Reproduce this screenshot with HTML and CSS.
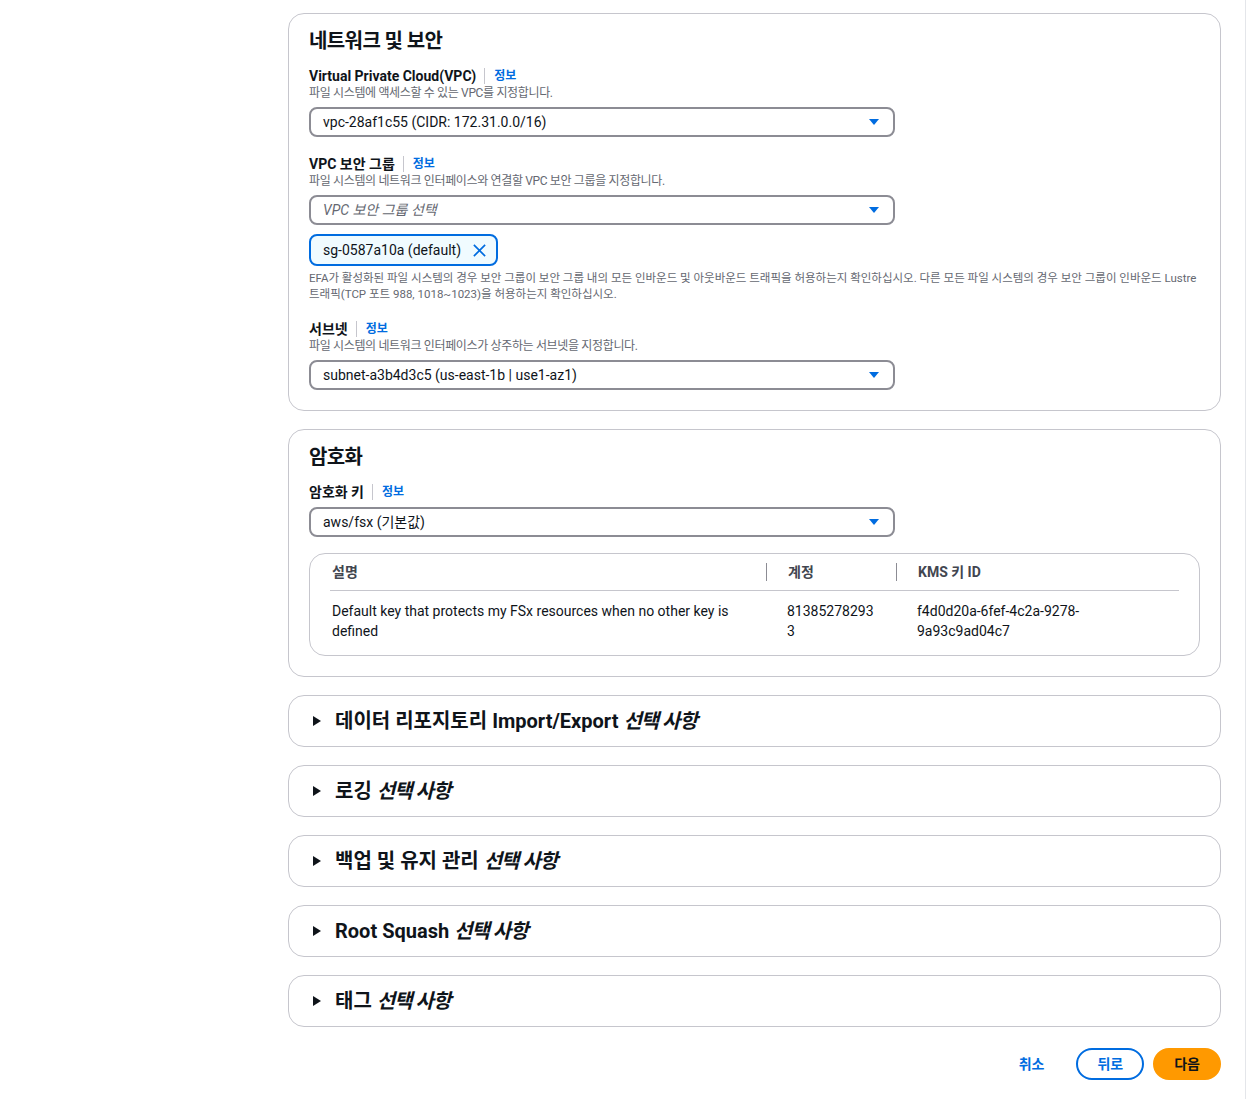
FILE: index.html
```html
<!DOCTYPE html>
<html lang="ko">
<head>
  <meta charset="UTF-8">
  <meta name="viewport" content="width=device-width, initial-scale=1.0">
  <title>파일 시스템 생성</title>
  <link rel="stylesheet" href="styles.css">
</head>
<body>
  <div class="page">
    <main class="main">

      <section class="panel">
        <h2 class="panel-title">네트워크 및 보안</h2>

        <div class="field">
          <div class="label-row">
            <span class="label">Virtual Private Cloud(VPC)</span>
            <a class="info" href="#">정보</a>
          </div>
          <div class="desc">파일 시스템에 액세스할 수 있는 VPC를 지정합니다.</div>
          <div class="select">
            <span class="select-value">vpc-28af1c55 (CIDR: 172.31.0.0/16)</span>
            <svg class="caret" viewBox="0 0 16 16" width="16" height="16"><polygon points="3,5 13,5 8,11"/></svg>
          </div>
        </div>

        <div class="field">
          <div class="label-row">
            <span class="label">VPC 보안 그룹</span>
            <a class="info" href="#">정보</a>
          </div>
          <div class="desc">파일 시스템의 네트워크 인터페이스와 연결할 VPC 보안 그룹을 지정합니다.</div>
          <div class="select">
            <span class="select-value placeholder">VPC 보안 그룹 선택</span>
            <svg class="caret" viewBox="0 0 16 16" width="16" height="16"><polygon points="3,5 13,5 8,11"/></svg>
          </div>
          <div class="tokens">
            <div class="token">
              <span>sg-0587a10a (default)</span>
              <svg class="dismiss" viewBox="0 0 16 16" width="16" height="16"><path d="M2 2l12 12M14 2L2 14"/></svg>
            </div>
          </div>
          <div class="constraint">EFA가 활성화된 파일 시스템의 경우 보안 그룹이 보안 그룹 내의 모든 인바운드 및 아웃바운드 트래픽을 허용하는지 확인하십시오. 다른 모든 파일 시스템의 경우 보안 그룹이 인바운드 Lustre 트래픽(TCP 포트 988, 1018~1023)을 허용하는지 확인하십시오.</div>
        </div>

        <div class="field">
          <div class="label-row">
            <span class="label">서브넷</span>
            <a class="info" href="#">정보</a>
          </div>
          <div class="desc">파일 시스템의 네트워크 인터페이스가 상주하는 서브넷을 지정합니다.</div>
          <div class="select">
            <span class="select-value">subnet-a3b4d3c5 (us-east-1b | use1-az1)</span>
            <svg class="caret" viewBox="0 0 16 16" width="16" height="16"><polygon points="3,5 13,5 8,11"/></svg>
          </div>
        </div>
      </section>

      <section class="panel">
        <h2 class="panel-title">암호화</h2>

        <div class="field">
          <div class="label-row">
            <span class="label">암호화 키</span>
            <a class="info" href="#">정보</a>
          </div>
          <div class="select">
            <span class="select-value">aws/fsx (기본값)</span>
            <svg class="caret" viewBox="0 0 16 16" width="16" height="16"><polygon points="3,5 13,5 8,11"/></svg>
          </div>
        </div>

        <div class="key-table">
          <table>
            <colgroup>
              <col class="col-desc">
              <col class="col-account">
              <col class="col-id">
            </colgroup>
            <thead>
              <tr>
                <th><span class="th-text">설명</span></th>
                <th><span class="th-text">계정</span></th>
                <th><span class="th-text">KMS 키 ID</span></th>
              </tr>
            </thead>
            <tbody>
              <tr>
                <td>Default key that protects my FSx resources when no other key is defined</td>
                <td class="account">813852782933</td>
                <td>f4d0d20a-6fef-4c2a-9278-9a93c9ad04c7</td>
              </tr>
            </tbody>
          </table>
        </div>
      </section>

      <section class="panel collapsed">
        <svg class="expand" viewBox="0 0 16 16" width="16" height="16"><polygon points="4,3 12,8 4,13"/></svg>
        <h2 class="collapsed-title">데이터 리포지토리 Import/Export <em>선택 사항</em></h2>
      </section>

      <section class="panel collapsed">
        <svg class="expand" viewBox="0 0 16 16" width="16" height="16"><polygon points="4,3 12,8 4,13"/></svg>
        <h2 class="collapsed-title">로깅 <em>선택 사항</em></h2>
      </section>

      <section class="panel collapsed">
        <svg class="expand" viewBox="0 0 16 16" width="16" height="16"><polygon points="4,3 12,8 4,13"/></svg>
        <h2 class="collapsed-title">백업 및 유지 관리 <em>선택 사항</em></h2>
      </section>

      <section class="panel collapsed">
        <svg class="expand" viewBox="0 0 16 16" width="16" height="16"><polygon points="4,3 12,8 4,13"/></svg>
        <h2 class="collapsed-title">Root Squash <em>선택 사항</em></h2>
      </section>

      <section class="panel collapsed">
        <svg class="expand" viewBox="0 0 16 16" width="16" height="16"><polygon points="4,3 12,8 4,13"/></svg>
        <h2 class="collapsed-title">태그 <em>선택 사항</em></h2>
      </section>

      <div class="actions">
        <button class="btn btn-link">취소</button>
        <button class="btn btn-normal">뒤로</button>
        <button class="btn btn-primary">다음</button>
      </div>
    </main>
    <div class="rail"></div>
  </div>
</body>
</html>
```

FILE: styles.css
```css
body {
  margin: 0;
  padding: 0;
  font-family: Roboto, "Noto Sans CJK KR", sans-serif;
  font-size: 14px;
  color: #0f141a;
  background-color: #ffffff;
}

.page {
  display: flex;
  min-height: 100vh;
}

.main {
  flex: 0 0 auto;
  width: 933px;
  padding: 13px 24px 18px 288px;
  display: flex;
  flex-direction: column;
  gap: 18px;
}

.rail {
  flex: 1;
  border-left: 1px solid #e4e6ea;
}

.panel {
  border: 1px solid #c6c6cd;
  border-radius: 16px;
  padding: 13px 20px 20px;
  box-sizing: border-box;
}

.panel-title {
  margin: 0 0 12px;
  font-size: 20px;
  line-height: 28px;
  font-weight: 700;
  letter-spacing: -0.6px;
}

.field + .field {
  margin-top: 18px;
}

.label-row {
  display: flex;
  align-items: center;
  line-height: 18px;
}

.label {
  font-size: 14px;
  font-weight: 700;
}

.info {
  margin-left: 8px;
  padding-left: 9px;
  border-left: 1px solid #c6c6cd;
  font-size: 12px;
  line-height: 16px;
  font-weight: 700;
  color: #006ce0;
  text-decoration: none;
}

.desc {
  font-size: 12px;
  line-height: 16px;
  color: #656871;
  letter-spacing: -0.35px;
}

.select {
  margin-top: 6px;
  width: 586px;
  height: 30px;
  box-sizing: border-box;
  border: 2px solid #8c8c94;
  border-radius: 8px;
  padding: 0 11px 0 12px;
  display: flex;
  align-items: center;
  justify-content: space-between;
}

.select-value {
  font-size: 14px;
  line-height: 20px;
}

.placeholder {
  color: #656871;
  font-style: italic;
}

.caret {
  fill: #006ce0;
}

.tokens {
  margin-top: 9px;
  display: flex;
}

.token {
  height: 32px;
  box-sizing: border-box;
  border: 2px solid #006ce0;
  border-radius: 8px;
  background-color: #f0fbff;
  padding: 0 9px 0 12px;
  display: flex;
  align-items: center;
  gap: 11px;
  font-size: 14px;
}

.dismiss {
  stroke: #006ce0;
  stroke-width: 1.8;
  fill: none;
  width: 15px;
  height: 15px;
}

.constraint {
  margin-top: 4px;
  font-size: 11.5px;
  line-height: 16px;
  color: #656871;
}

.key-table {
  margin-top: 16px;
  border: 1px solid #c6c6cd;
  border-radius: 16px;
  padding: 0 20px;
}

.key-table table {
  width: 849px;
  table-layout: fixed;
  border-collapse: collapse;
}

.col-desc {
  width: 436px;
}

.col-account {
  width: 130px;
}

.col-id {
  width: 283px;
}

.key-table th {
  text-align: left;
  padding: 9px 0;
  border-bottom: 1px solid #c6c6cd;
  font-weight: 700;
  color: #424650;
  line-height: 18px;
}

.th-text {
  display: block;
  padding: 0 20px 0 21px;
}

.key-table th + th .th-text {
  border-left: 1px solid #8c8c94;
}

.key-table th:first-child .th-text {
  padding-left: 2px;
}

.key-table td {
  vertical-align: top;
  padding: 10px 20px 14px 21px;
  line-height: 20px;
}

.key-table td:first-child {
  padding-left: 2px;
}

.account {
  word-break: break-all;
}

.collapsed {
  height: 52px;
  padding: 0 20px;
  display: flex;
  align-items: center;
  gap: 10px;
}

.expand {
  fill: #0f141a;
}

.collapsed-title {
  margin: 0;
  font-size: 20px;
  line-height: 24px;
  font-weight: 700;
}

.collapsed-title em {
  font-style: italic;
  letter-spacing: -1px;
}

.actions {
  margin-top: 3px;
  display: flex;
  justify-content: flex-end;
  gap: 9px;
}

.btn {
  font-family: Roboto, "Noto Sans CJK KR", sans-serif;
  font-size: 14px;
  font-weight: 700;
  height: 32px;
  padding: 0 20px;
  border-radius: 20px;
  border: 2px solid transparent;
  background: none;
  cursor: pointer;
  line-height: 20px;
}

.btn-link {
  color: #006ce0;
}

.btn-normal {
  color: #006ce0;
  border-color: #006ce0;
  padding: 0 19px;
  margin-left: 1px;
}

.btn-primary {
  background-color: #ff9900;
  border-color: #ff9900;
  color: #0f141a;
  padding: 0 19px;
}
```
